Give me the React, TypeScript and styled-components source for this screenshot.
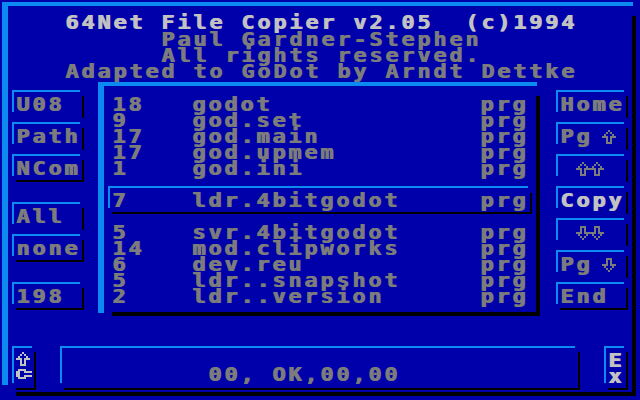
import React from "react";
import styled, { createGlobalStyle, css } from "styled-components";

const BLUE = "#0000aa";
const LIGHT = "#0b8af2";
const GREY = "#7c7c7c";
const PALE = "#c2c2c2";
const SHADE = "#000000";

const GlobalStyle = createGlobalStyle`
  html, body {
    margin: 0;
    padding: 0;
    background: ${BLUE};
  }
  body {
    font-family: "DejaVu Sans Mono", "Liberation Mono", monospace;
  }
`;

// GoDot style box: light lines top/left, black shadow lines right/bottom
type Frame = {
  top: number;
  left: number;
  dark: number;
  offX: number;
  offY: number;
  trimX: number;
  trimY: number;
  bottom?: boolean;
};

const frame = (f: Frame) => {
  const shadowBottom = f.bottom !== false;
  return css`
    background-image:
      linear-gradient(${LIGHT}, ${LIGHT}),
      linear-gradient(${LIGHT}, ${LIGHT}),
      linear-gradient(${SHADE}, ${SHADE})
      ${shadowBottom ? `, linear-gradient(${SHADE}, ${SHADE})` : ""};
    background-repeat: no-repeat;
    background-position: left top, left top, right bottom
      ${shadowBottom ? ", right bottom" : ""};
    background-size:
      calc(100% - ${f.trimX}px) ${f.top}px,
      ${f.left}px calc(100% - ${f.trimY}px),
      ${f.dark}px calc(100% - ${f.offY}px)
      ${shadowBottom ? `, calc(100% - ${f.offX}px) ${f.dark}px` : ""};
  `;
};

const Screen = styled.div`
  width: 640px;
  height: 400px;
  box-sizing: border-box;
  padding: 2px 4px 4px 2px;
  background: ${BLUE};
  overflow: hidden;
`;

const Outer = styled.div`
  ${frame({ top: 4, left: 6, dark: 4, offX: 14, offY: 14, trimX: 3, trimY: 11 })}
  width: 100%;
  height: 100%;
  box-sizing: border-box;
  padding: 12px 8px 6px 10px;
  display: flex;
  flex-direction: column;
`;

// chunky 8x8-cell look: 16px pitch, widened glyphs, doubled stems
const Txt = styled.span<{ $tone?: "pale" | "grey" }>`
  display: inline-block;
  font-size: 19px;
  font-weight: bold;
  letter-spacing: 2.47px;
  line-height: 16px;
  white-space: pre;
  transform: scaleX(1.15);
  transform-origin: left top;
  text-shadow: 1px 0 0 currentColor;
  color: ${(p) => (p.$tone === "pale" ? PALE : GREY)};
`;

const Header = styled.div`
  height: 68px;
  padding-left: 53px;
  display: flex;
  flex-direction: column;
`;

const HeadLine = styled.div<{ $indent: number; $gap?: number }>`
  height: 16px;
  line-height: 16px;
  margin-left: ${(p) => p.$indent * 16}px;
  margin-bottom: ${(p) => p.$gap ?? 0}px;
`;

const Main = styled.div`
  height: 234px;
  display: flex;
  gap: 14px;
`;

const Column = styled.div<{ $groupGap: number }>`
  width: 72px;
  padding-top: 8px;
  display: flex;
  flex-direction: column;
  gap: ${(p) => p.$groupGap}px;
`;

const Group = styled.div`
  display: flex;
  flex-direction: column;
  gap: 4px;
`;

const Button = styled.div<{ $last?: boolean }>`
  ${(p) =>
    frame({ top: 2, left: 2, dark: 2, offX: 4, offY: 6, trimX: 4, trimY: 6, bottom: !!p.$last })}
  width: 72px;
  height: 28px;
  box-sizing: border-box;
  padding: 6px 0 0 4px;
  display: flex;
  align-items: flex-start;
`;

const Cell = styled.span<{ $cells: number }>`
  display: inline-flex;
  width: ${(p) => p.$cells * 16}px;
  height: 16px;
  align-items: flex-start;
`;

const Panel = styled.div`
  ${frame({ top: 4, left: 6, dark: 4, offX: 14, offY: 14, trimX: 3, trimY: 3 })}
  width: 442px;
  height: 234px;
  box-sizing: border-box;
  padding: 14px 0 0 10px;
  margin-right: 2px;
`;

const Rows = styled.div<{ $gapTop?: number }>`
  padding-left: 4px;
  margin-top: ${(p) => p.$gapTop ?? 0}px;
`;

const Row = styled.div`
  display: grid;
  grid-template-columns: 80px 288px 48px;
  height: 16px;
  line-height: 16px;
`;

const Selected = styled.div`
  ${frame({ top: 2, left: 2, dark: 2, offX: 4, offY: 7, trimX: 4, trimY: 6 })}
  width: 424px;
  height: 28px;
  box-sizing: border-box;
  margin-top: 10px;
  padding: 6px 4px 0 4px;
`;

const Footer = styled.div`
  margin-top: 30px;
  height: 44px;
  display: flex;
  gap: 24px;
`;

const SmallKey = styled.div`
  ${frame({ top: 2, left: 2, dark: 2, offX: 4, offY: 6, trimX: 4, trimY: 7 })}
  width: 24px;
  height: 44px;
  box-sizing: border-box;
  padding: 6px 0 0 4px;
  display: flex;
  flex-direction: column;
`;

const KeyLine = styled.div`
  height: 16px;
  line-height: 16px;
  display: flex;
  align-items: flex-start;
`;

const Status = styled.div`
  ${frame({ top: 2, left: 2, dark: 2, offX: 4, offY: 6, trimX: 5, trimY: 7 })}
  width: 520px;
  height: 44px;
  box-sizing: border-box;
  padding: 20px 0 0 148px;
  line-height: 16px;
`;

function Pixels({ rows, color, dy = 0 }: { rows: string[]; color: string; dy?: number }) {
  const w = rows[0].length;
  const h = rows.length;
  return (
    <svg
      width={w * 2}
      height={h * 2}
      viewBox={`0 0 ${w} ${h}`}
      shapeRendering="crispEdges"
      style={{ marginTop: dy }}
    >
      {rows.flatMap((r, y) =>
        r.split("").map((c, x) =>
          c === "X" ? <rect key={`${x}-${y}`} x={x} y={y} width={1} height={1} fill={color} /> : null
        )
      )}
    </svg>
  );
}

const UP = [
  "...X...",
  "..X.X..",
  ".X...X.",
  "XXX.XXX",
  "..X.X..",
  "..X.X..",
  "..XXX..",
];
const DOWN = [...UP].reverse();
const UP2 = [
  "...X......X...",
  "..X.X....X.X..",
  ".X...X..X...X.",
  "XXX.XXXXXX.XXX",
  "..X.X....X.X..",
  "..X.X....X.X..",
  "..XXX....XXX..",
];
const DOWN2 = [...UP2].reverse();
const CBM = [
  ".XXXX...",
  "XX..XXXX",
  "XX......",
  "XX..XXXX",
  ".XXXX...",
];

const upper = [
  ["18", "godot"],
  ["9", "god.set"],
  ["17", "god.main"],
  ["17", "god.upmem"],
  ["1", "god.ini"],
];
const lower = [
  ["5", "svr.4bitgodot"],
  ["14", "mod.clipworks"],
  ["6", "dev.reu"],
  ["5", "ldr..snapshot"],
  ["2", "ldr..version"],
];

function FileRow({ blocks, name }: { blocks: string; name: string }) {
  return (
    <Row>
      <Txt>{blocks}</Txt>
      <Txt>{name}</Txt>
      <Txt>prg</Txt>
    </Row>
  );
}

export default function App() {
  return (
    <Screen>
      <GlobalStyle />
      <Outer>
        <Header>
          <HeadLine $indent={0} $gap={1}>
            <Txt $tone="pale">64Net File Copier v2.05  (c)1994</Txt>
          </HeadLine>
          <HeadLine $indent={6}>
            <Txt>Paul Gardner-Stephen</Txt>
          </HeadLine>
          <HeadLine $indent={6}>
            <Txt>All rights reserved.</Txt>
          </HeadLine>
          <HeadLine $indent={0}>
            <Txt>Adapted to GoDot by Arndt Dettke</Txt>
          </HeadLine>
        </Header>

        <Main>
          <Column $groupGap={20}>
            <Group>
              <Button><Txt>U08</Txt></Button>
              <Button><Txt>Path</Txt></Button>
              <Button $last><Txt>NCom</Txt></Button>
            </Group>
            <Group>
              <Button><Txt>All</Txt></Button>
              <Button $last><Txt>none</Txt></Button>
            </Group>
            <Group>
              <Button $last><Txt>198</Txt></Button>
            </Group>
          </Column>

          <Panel>
            <Rows>
              {upper.map(([b, n], i) => (
                <FileRow key={i} blocks={b} name={n} />
              ))}
            </Rows>
            <Selected>
              <FileRow blocks="7" name="ldr.4bitgodot" />
            </Selected>
            <Rows $gapTop={10}>
              {lower.map(([b, n], i) => (
                <FileRow key={i} blocks={b} name={n} />
              ))}
            </Rows>
          </Panel>

          <Column $groupGap={0}>
            <Group>
              <Button><Txt>Home</Txt></Button>
              <Button>
                <Txt>Pg </Txt>
                <Cell $cells={1}><Pixels rows={UP} color={GREY} dy={2} /></Cell>
              </Button>
              <Button>
                <Cell $cells={1} />
                <Cell $cells={2}><Pixels rows={UP2} color={GREY} dy={2} /></Cell>
              </Button>
              <Button><Txt $tone="pale">Copy</Txt></Button>
              <Button>
                <Cell $cells={1} />
                <Cell $cells={2}><Pixels rows={DOWN2} color={GREY} dy={2} /></Cell>
              </Button>
              <Button>
                <Txt>Pg </Txt>
                <Cell $cells={1}><Pixels rows={DOWN} color={GREY} dy={2} /></Cell>
              </Button>
              <Button $last><Txt>End</Txt></Button>
            </Group>
          </Column>
        </Main>

        <Footer>
          <SmallKey>
            <KeyLine><Pixels rows={UP} color={PALE} dy={0} /></KeyLine>
            <KeyLine><Pixels rows={CBM} color={PALE} dy={1} /></KeyLine>
          </SmallKey>
          <Status>
            <Txt>00, OK,00,00</Txt>
          </Status>
          <SmallKey>
            <KeyLine><Txt $tone="pale">E</Txt></KeyLine>
            <KeyLine><Txt $tone="pale">x</Txt></KeyLine>
          </SmallKey>
        </Footer>
      </Outer>
    </Screen>
  );
}
